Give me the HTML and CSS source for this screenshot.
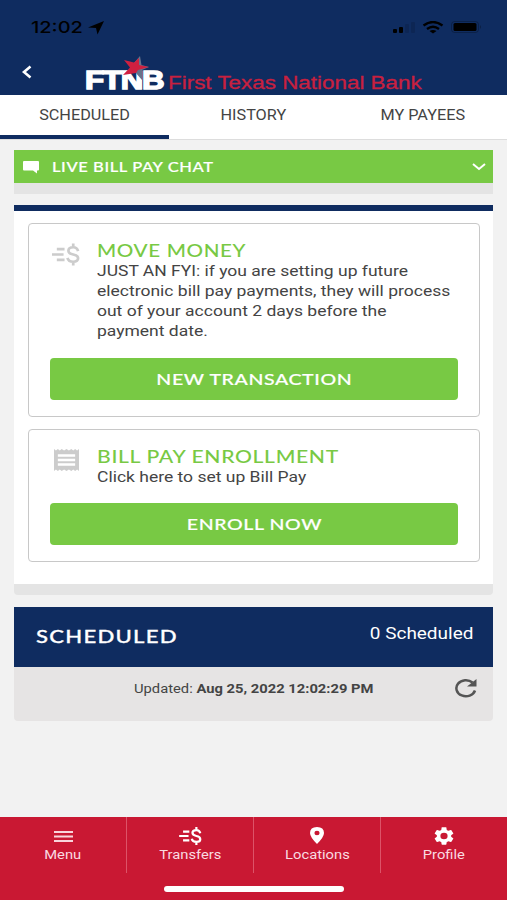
FILE: index.html
```html
<!DOCTYPE html>
<html lang="en">
  <head>
    <meta charset="utf-8">
    <title>First Texas National Bank</title>
    <link rel="stylesheet" href="styles.css">
  </head>
  <body>
    <header class="header">
      <div class="status">
        <span class="wide time">12:02</span>
        <svg class="arrow" width="17" height="14" viewBox="0 0 17 14"><path d="M16 0L0 6.5L8 7L9.5 13.5Z"/></svg>
        <svg class="status-icons" width="90" height="16" viewBox="0 0 90 16">
          <rect x="0" y="8" width="4" height="4" rx="1"/>
          <rect x="6" y="6" width="4" height="6" rx="1"/>
          <g opacity=".12"><rect x="12" y="3" width="4" height="9" rx="1"/><rect x="18" y="1" width="4" height="11" rx="1"/></g>
          <path d="M30.500 4.500Q40 -2.500 49.500 4.500M34 8Q40 3.500 46 8" fill="none" stroke="#000" stroke-width="2.300"/>
          <path d="M36.500 10Q40 8 43.500 10L40 12.500Z"/>
          <rect x="58.500" y=".5" width="27" height="11" rx="3" fill="none" stroke="#000" opacity=".25"/>
          <rect x="60.500" y="2" width="23" height="8" rx="1.500"/>
          <path d="M87 4Q89 6 87 8Z" opacity=".3"/>
        </svg>
      </div>
      <div class="brand">
        <svg class="back" width="11" height="14" viewBox="0 0 11 14"><path d="M9.500 1.500L3 7L9.500 12.500" fill="none" stroke="#fff" stroke-width="2.600"/></svg>
        <div class="logo">
          <span class="wide ftnb">FTNB</span>
          <svg class="star" width="28" height="25" viewBox="0 0 28 25">
            <path d="M17 0L18.500 9L26 11L19 14L19 24L12 16L11 7Z" fill="#66728a"/>
            <path d="M1 4L11 6.500L16 2L16 9L26 11L15 14L13 17L0 19L7 11.500Z" fill="#d02040"/>
          </svg>
        </div>
        <span class="wide bank">First Texas National Bank</span>
      </div>
    </header>

    <nav class="tabs">
      <div class="tab active"><span class="wide">SCHEDULED</span></div>
      <div class="tab"><span class="wide">HISTORY</span></div>
      <div class="tab"><span class="wide">MY PAYEES</span></div>
    </nav>

    <main class="content">
      <div class="chat">
        <svg class="bubble" width="17" height="13" viewBox="0 0 17 13"><path d="M1 0H15Q16 0 16 1V8.500Q16 9.500 15 9.500H14V12.500L10 9.500H1Q0 9.500 0 8.500V1Q0 0 1 0Z" fill="#fff"/></svg>
        <span class="wide chat-title">LIVE BILL PAY CHAT</span>
        <svg class="chevron" width="14" height="8" viewBox="0 0 14 8"><path d="M1 1L7 6L13 1" fill="none" stroke="#fff" stroke-width="2"/></svg>
      </div>

      <section class="panel">
        <div class="card">
          <div class="card-top">
            <svg class="money" width="29" height="23" viewBox="0 0 29 23"><use href="#transfer"/></svg>
            <div class="card-text">
              <h2 class="wide move">MOVE MONEY</h2>
              <p class="wide copy">JUST AN FYI: if you are setting up future<br>electronic bill pay payments, they will process<br>out of your account 2 days before the<br>payment date.</p>
            </div>
          </div>
          <div class="button"><span class="wide">NEW TRANSACTION</span></div>
        </div>
        <div class="card enroll">
          <div class="card-top">
            <svg class="receipt" width="25" height="22" viewBox="0 0 26 22" preserveAspectRatio="none">
              <path d="M0 0L2 1.500L4 0L6 1.500L8 0L10.500 1.500L13 0L15.500 1.500L18 0L20 1.500L22 0L24 1.500L26 0V22L24 20.500L22 22L20 20.500L18 22L15.500 20.500L13 22L10.500 20.500L8 22L6 20.500L4 22L2 20.500L0 22Z" fill="#ccc"/>
              <path d="M4 6.500H22M4 11H22M4 15.500H22" stroke="#fff" stroke-width="2.500"/>
            </svg>
            <div class="card-text">
              <h2 class="wide enrollment">BILL PAY ENROLLMENT</h2>
              <p class="wide copy">Click here to set up Bill Pay</p>
            </div>
          </div>
          <div class="button"><span class="wide">ENROLL NOW</span></div>
        </div>
      </section>

      <section class="scheduled">
        <div class="scheduled-head">
          <h2 class="wide">SCHEDULED</h2>
          <span class="wide count">0 Scheduled</span>
        </div>
        <div class="updated">
          <span class="wide">Updated: <b>Aug 25, 2022 12:02:29 PM</b></span>
          <svg class="refresh" width="24" height="20" viewBox="0 0 24 20"><path d="M18.500 4.500A9.500 8 0 1 0 21 12.500" fill="none" stroke="#555" stroke-width="2.500"/><path d="M22.500 1V8.500H13Z" fill="#555"/></svg>
        </div>
      </section>
    </main>

    <footer class="footer">
      <div class="item">
        <svg width="19" height="18" viewBox="0 0 19 18"><path d="M0 5H19M0 9.500H19M0 14H19" stroke="#f9d5dc" stroke-width="2"/></svg>
        <span class="wide">Menu</span>
      </div>
      <div class="item">
        <svg class="transfer-icon" width="23" height="18" viewBox="0 0 29 23">
          <g id="transfer" fill="none" stroke="currentColor" stroke-width="2.800">
            <path d="M5 6H13M0 11.500H12M5 17H13"/>
            <path d="M27 8Q26 4 22 4Q17 4 17 7.500Q17 10.500 22 11.500Q27 12.500 27 15.500Q27 19 22 19Q17 19 16 15M22 0V4M22 19V23"/>
          </g>
        </svg>
        <span class="wide">Transfers</span>
      </div>
      <div class="item">
        <svg width="16" height="18" viewBox="0 0 16 18"><path fill-rule="evenodd" d="M8 0Q15 0 15 6Q15 10 8 17Q1 10 1 6Q1 0 8 0ZM8 3.800A2.600 2.200 0 1 0 8 8.200A2.600 2.200 0 1 0 8 3.800Z" fill="#fff"/></svg>
        <span class="wide">Locations</span>
      </div>
      <div class="item">
        <svg width="20" height="18" viewBox="2 2 20 20" preserveAspectRatio="none"><path fill="#fff" d="M19.140 12.940c.04-.3.06-.61.06-.94 0-.32-.02-.64-.07-.94l2.030-1.580c.18-.14.23-.41.12-.61l-1.920-3.320c-.12-.22-.37-.29-.59-.22l-2.390.96c-.5-.38-1.030-.7-1.620-.94l-.36-2.540c-.04-.24-.24-.41-.48-.41h-3.840c-.24 0-.43.17-.47.41l-.36 2.540c-.59.24-1.130.57-1.620.94l-2.390-.96c-.22-.08-.47 0-.59.22L2.740 8.870c-.12.21-.08.47.12.61l2.030 1.580c-.05.3-.09.63-.09.94s.02.64.07.94l-2.030 1.580c-.18.14-.23.41-.12.61l1.920 3.320c.12.22.37.29.59.22l2.390-.96c.5.38 1.030.7 1.620.94l.36 2.540c.05.24.24.41.48.41h3.840c.24 0 .44-.17.47-.41l.36-2.540c.59-.24 1.130-.56 1.620-.94l2.390.96c.22.08.47 0 .59-.22l1.920-3.320c.12-.22.07-.47-.12-.61l-2.010-1.580zM12 15.600A3.600 3.600 0 1 1 12 8.400A3.600 3.600 0 0 1 12 15.600z"/></svg>
        <span class="wide">Profile</span>
      </div>
      <div class="home-bar"></div>
    </footer>
  </body>
</html>
```
FILE: styles.css
```css
* {
    box-sizing: border-box;
}

body {
    margin: 0;
    height: 900px;
    display: flex;
    flex-direction: column;
    overflow: hidden;
    background: #f2f2f2;
    color: #444;
    font-family: Roboto, sans-serif;
}

h2, p {
    margin: 0;
}

svg {
    display: block;
    flex: none;
}

/* extended lettering */
.wide {
    display: inline-block;
    white-space: nowrap;
    transform: scaleX(1.15);
}

.header {
    height: 95px;
    background: #0f2c60;
}

.status {
    height: 55px;
    padding: 17px 24px 0 31px;
    display: flex;
    align-items: flex-start;
}

.time {
    width: 51px;
    color: #000;
    font: 500 16.5px/21px Inter, sans-serif;
    transform: scaleX(1.21);
    transform-origin: left;
}

.arrow {
    margin: 4px 0 0 6px;
}

.status-icons {
    margin: 4px 0 0 auto;
}

.brand {
    height: 40px;
    padding-left: 21px;
    display: flex;
}

.back {
    margin-top: 10px;
}

.logo {
    position: relative;
    width: 83px;
    margin-left: 53px;
}

.ftnb {
    color: #fff;
    font: bold 25px/28px "Liberation Sans", sans-serif;
    margin-top: 11px;
    letter-spacing: -1px;
    -webkit-text-stroke: 1.4px #fff;
    transform: scaleX(1.25);
    transform-origin: left;
}

.star {
    position: absolute;
    left: 38px;
    top: 1px;
}

.bank {
    margin-top: 18px;
    color: #c8203f;
    font: 18px/20px "Liberation Sans", sans-serif;
    -webkit-text-stroke: .3px #c8203f;
    transform: scaleX(1.245);
    transform-origin: left;
}

.tabs {
    height: 45px;
    display: flex;
    background: #fff;
    border-bottom: 1px solid #ddd;
}

.tab {
    flex: 1;
    padding-top: 11px;
    text-align: center;
    font-size: 14.5px;
    line-height: 20px;
}

.tab .wide {
    transform: scaleX(1.12);
}

.active {
    border-bottom: 4px solid #0f2c60;
}

.content {
    padding: 10px 14px 0;
}

.chat {
    height: 44px;
    padding: 0 7px 0 9px;
    display: flex;
    align-items: center;
    background: #78c944;
    border-bottom: 11px solid #e4e4e4;
}

.bubble {
    margin-top: 2px;
}

.chat-title {
    margin-left: 12px;
    color: #fff;
    font: 500 14px/20px Lato, sans-serif;
    letter-spacing: .5px;
    -webkit-text-stroke: .2px #fff;
    transform: scaleX(1.18);
    transform-origin: left;
}

.chevron {
    margin-left: auto;
}

.panel {
    height: 390px;
    margin-top: 11px;
    padding: 12px 13px 0 14px;
    display: flex;
    flex-direction: column;
    gap: 12px;
    background: #fff;
    border-top: 6px solid #0f2c60;
    border-bottom: 11px solid #e4e4e4;
    border-radius: 0 0 4px 4px;
}

.card {
    padding: 17px 21px 16px;
    border: 1px solid #c8c8c8;
    border-radius: 4px;
}

.card-top {
    display: flex;
}

.card-text {
    display: flex;
    flex-direction: column;
    align-items: flex-start;
}

.money {
    width: 28px;
    color: #ccc;
    margin: 2px 17px 0 2px;
}

.receipt {
    margin: 2px 18px 0 4px;
}

.card-text h2 {
    color: #78c944;
    font: 500 16.5px/20px Lato, sans-serif;
    letter-spacing: .5px;
    transform-origin: left;
}

.card-text .move {
    transform: scaleX(1.25);
}

.card-text .enrollment {
    transform: scaleX(1.282);
}

.copy {
    font-size: 15px;
    line-height: 20px;
    transform: scaleX(1.166);
    transform-origin: left;
}

.button {
    height: 42px;
    margin-top: 17px;
    background: #78c944;
    border-radius: 4px;
    color: #fff;
    text-align: center;
    font: 500 16px/41px Lato, sans-serif;
    letter-spacing: .5px;
    -webkit-text-stroke: .2px #fff;
}

.button .wide {
    transform: scaleX(1.22);
}

.enroll .button {
    margin-top: 16px;
}

.scheduled {
    margin-top: 12px;
}

.scheduled-head {
    height: 60px;
    padding: 0 20px 0 22px;
    display: flex;
    justify-content: space-between;
    background: #0f2c60;
    color: #fff;
}

.scheduled-head h2 {
    font: 500 18px/58px Lato, sans-serif;
    letter-spacing: 1px;
    -webkit-text-stroke: .3px #fff;
    transform: scaleX(1.23);
    transform-origin: left;
}

.count {
    font-size: 16px;
    line-height: 54px;
    transform: scaleX(1.185);
    transform-origin: right;
}

.updated {
    height: 54px;
    padding: 11px 15px 0 120px;
    display: flex;
    justify-content: space-between;
    background: #e6e4e4;
    border-radius: 0 0 4px 4px;
    font-size: 12.5px;
    line-height: 22px;
}

.updated .wide {
    transform: scaleX(1.18);
    transform-origin: left;
}

.footer {
    position: relative;
    height: 83px;
    margin-top: auto;
    display: flex;
    background: #c91833;
    color: #f9dbe1;
}

.item {
    flex: 1;
    height: 56px;
    padding-top: 10px;
    display: flex;
    flex-direction: column;
    align-items: center;
    font-size: 12.5px;
    line-height: 20px;
}

.item .wide {
    transform: scaleX(1.18);
}

.item + .item {
    border-left: 1px solid #dc5368;
}

.transfer-icon {
    color: #fff;
}

.home-bar {
    position: absolute;
    left: 164px;
    bottom: 8px;
    width: 180px;
    height: 6px;
    border-radius: 3px;
    background: #fff;
}
```
